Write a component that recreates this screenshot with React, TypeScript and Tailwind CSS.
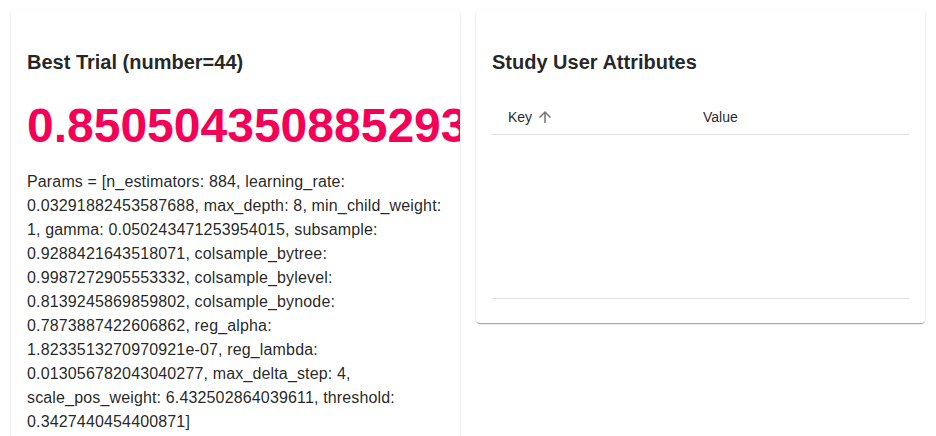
import React from "react";

const cardShadow =
  "shadow-[0px_2px_1px_-1px_rgba(0,0,0,0.2),0px_1px_1px_0px_rgba(0,0,0,0.14),0px_1px_3px_0px_rgba(0,0,0,0.12)]";

function ArrowUp() {
  return (
    <svg width="18" height="18" viewBox="0 0 24 24" className="ml-1 mr-1" fill="rgba(0,0,0,0.54)">
      <path d="M4 12l1.41 1.41L11 7.83V20h2V7.83l5.58 5.59L20 12l-8-8-8 8z" />
    </svg>
  );
}

export default function App() {
  return (
    <div className="w-[936px] h-[436px] overflow-hidden bg-white font-['Liberation_Sans',Arial,sans-serif] text-[rgba(0,0,0,0.87)]">
      <div className="flex items-start gap-4 px-[11px] pt-[10px]">
        <div className={`flex-1 min-w-0 rounded bg-white overflow-hidden ${cardShadow}`}>
          <div className="p-4 pb-6">
            <h6 className="my-5 text-[20px] leading-[32px] font-bold">Best Trial (number=44)</h6>
            <div className="text-[48px] leading-[56px] font-bold text-[#f50057] whitespace-nowrap">
              0.850504350885293
            </div>
            <p className="mt-4 text-base leading-6 tracking-[0.15px]">
              Params = [n_estimators: 884, learning_rate: 0.03291882453587688, max_depth: 8, min_child_weight: 1,
              gamma: 0.050243471253954015, subsample: 0.9288421643518071, colsample_bytree: 0.9987272905553332,
              colsample_bylevel: 0.8139245869859802, colsample_bynode: 0.7873887422606862, reg_alpha:
              1.8233513270970921e-07, reg_lambda: 0.013056782043040277, max_delta_step: 4, scale_pos_weight:
              6.432502864039611, threshold: 0.3427440454400871]
            </p>
          </div>
        </div>
        <div className={`flex-1 min-w-0 rounded bg-white overflow-hidden ${cardShadow}`}>
          <div className="p-4 pb-6">
            <h6 className="my-5 text-[20px] leading-[32px] font-bold">Study User Attributes</h6>
            <div className="pt-[2px]">
              <div className="flex border-b border-[#e0e0e0] text-sm leading-5">
                <div className="w-[195px] px-4 py-[7px] flex items-center">
                  <span>Key</span>
                  <ArrowUp />
                </div>
                <div className="flex-1 px-4 py-[7px]">Value</div>
              </div>
              <div className="h-[164px] border-b border-[#e0e0e0]" />
            </div>
          </div>
        </div>
      </div>
    </div>
  );
}
